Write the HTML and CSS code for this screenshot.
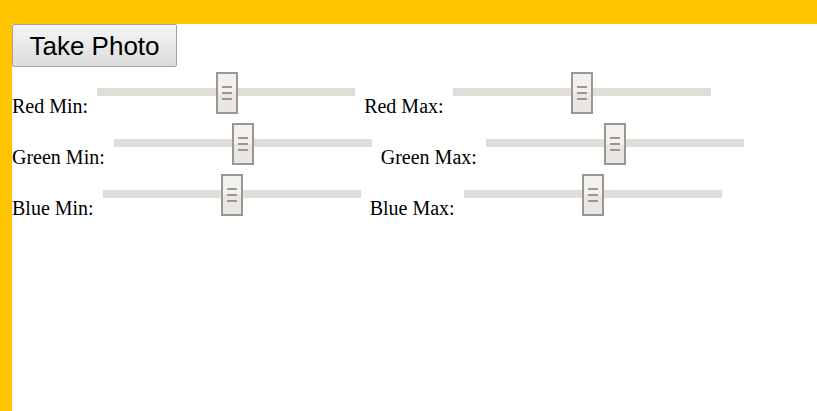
FILE: index.html
```html
<!DOCTYPE html>
<html>
<head>
<meta charset="utf-8">
<link rel="stylesheet" href="styles.css">
</head>
<body>
<div class="page">
  <button class="take-photo">Take Photo</button>
  <div class="controls">
    <div class="row">
      <span class="lbl">Red Min:</span>
      <input class="slider" type="range" min="0" max="255" value="128">
      <span class="lbl">Red Max:</span>
      <input class="slider" type="range" min="0" max="255" value="128">
    </div>
    <div class="row">
      <span class="lbl">Green Min:</span>
      <input class="slider" type="range" min="0" max="255" value="128">
      <span class="lbl">Green Max:</span>
      <input class="slider" type="range" min="0" max="255" value="128">
    </div>
    <div class="row">
      <span class="lbl">Blue Min:</span>
      <input class="slider" type="range" min="0" max="255" value="128">
      <span class="lbl">Blue Max:</span>
      <input class="slider" type="range" min="0" max="255" value="128">
    </div>
  </div>
</div>
</body>
</html>
```

FILE: styles.css
```css
html, body {
  margin: 0;
  padding: 0;
  height: 100%;
}

body {
  background: #ffc600;
  overflow: hidden;
}

.page {
  margin: 24px 0 0 12px;
  height: calc(100% - 24px);
  background: #ffffff;
  font-family: "Liberation Serif", "Times New Roman", serif;
  font-size: 20px;
  color: #000;
}

.take-photo {
  display: block;
  box-sizing: border-box;
  width: 165px;
  height: 43px;
  margin: 0;
  padding: 0 15px;
  font-family: "Liberation Sans", Arial, sans-serif;
  font-size: 26px;
  line-height: 30px;
  color: #000;
  border: 1px solid #a3a3a3;
  border-radius: 2px;
  background: linear-gradient(#f5f5f5, #dcdcdc);
  text-align: center;
}

.controls {
  padding-top: 4px;
}

.row {
  display: flex;
  align-items: flex-start;
  column-gap: 9px;
  height: 51px;
}

.lbl {
  display: block;
  line-height: 23px;
  margin-top: 24px;
  white-space: nowrap;
}

.slider {
  -webkit-appearance: none;
  appearance: none;
  display: block;
  width: 258px;
  height: 42px;
  margin: 0;
  padding: 0;
  background: transparent;
  flex: none;
}

.slider:focus {
  outline: none;
}

.slider::-webkit-slider-runnable-track {
  height: 8px;
  background: #e1ded9;
  border: none;
}

.slider::-webkit-slider-thumb {
  -webkit-appearance: none;
  appearance: none;
  box-sizing: border-box;
  width: 22px;
  height: 42px;
  margin-top: -16px;
  border: 2px solid #9c968e;
  border-radius: 0;
  background:
    repeating-linear-gradient(#9c968e 0 2px, transparent 2px 6px) 4px 12px / 10px 14px no-repeat,
    linear-gradient(#f2f1ef 50%, #e9e7e3 50%);
}
```
